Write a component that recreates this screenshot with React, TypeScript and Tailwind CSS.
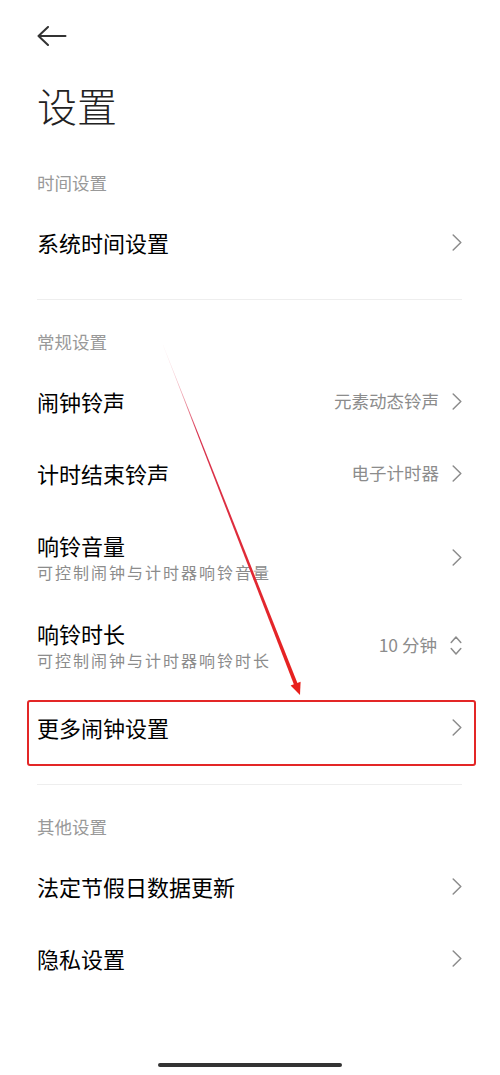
import React from 'react';

const font = { fontFamily: '"Noto Sans CJK SC", "Noto Sans", sans-serif' };

function Chevron() {
  return (
    <svg width="10" height="17" viewBox="0 0 10 17" fill="none" className="shrink-0">
      <path d="M1.2 1 L8.8 8.5 L1.2 16" stroke="#8c8c8c" strokeWidth="1.5" strokeLinecap="round" strokeLinejoin="round" />
    </svg>
  );
}

function UpDown() {
  return (
    <svg width="12" height="21" viewBox="0 0 12 21" fill="none" className="shrink-0">
      <path d="M1.2 7.5 L6 2 L10.8 7.5" stroke="#8c8c8c" strokeWidth="1.5" strokeLinecap="round" strokeLinejoin="round" />
      <path d="M1.2 13.5 L6 19 L10.8 13.5" stroke="#8c8c8c" strokeWidth="1.5" strokeLinecap="round" strokeLinejoin="round" />
    </svg>
  );
}

function SectionLabel({ children }: { children: React.ReactNode }) {
  return (
    <div className="h-[45px] flex items-center text-[17.5px] text-[#999999]">{children}</div>
  );
}

function Row({ title, value }: { title: string; value?: string }) {
  return (
    <div className="h-[72px] flex items-center justify-between">
      <span className="text-[22px] text-black">{title}</span>
      <div className="flex items-center gap-[13px]">
        {value && <span className="text-[17.5px] text-[#8c8c8c]">{value}</span>}
        <Chevron />
      </div>
    </div>
  );
}

function TwoLineRow({ title, sub, value, updown }: { title: string; sub: string; value?: string; updown?: boolean }) {
  return (
    <div className="h-[88px] pt-[22px] flex justify-between">
      <div className="flex flex-col">
        <span className="text-[22px] leading-[28px] text-black">{title}</span>
        <span className="text-[16px] leading-[24px] mt-[1px] tracking-[2px] text-[#8c8c8c]">{sub}</span>
      </div>
      <div className="h-[53px] flex items-center gap-[13px]">
        {value && <span className="text-[17.5px] text-[#8c8c8c]">{value}</span>}
        {updown ? <UpDown /> : <Chevron />}
      </div>
    </div>
  );
}

function Divider() {
  return <div className="h-px bg-[#eeeeee]" />;
}

export default function App() {
  return (
    <div className="relative w-[500px] min-h-[1075px] bg-white flex flex-col overflow-hidden" style={font}>
      <div className="px-[37px] pr-[38px] flex flex-col">
        <div className="h-[72px] flex items-center">
          <svg width="30" height="20" viewBox="0 0 30 20" fill="none">
            <path d="M1.5 10 H28.5 M11 1 L1.5 10 L11 19" stroke="#333333" strokeWidth="2" strokeLinecap="round" strokeLinejoin="round" />
          </svg>
        </div>
        <h1 className="mt-[5px] h-[56px] flex items-center text-[40px] font-light text-[#222222]">设置</h1>

        <div className="mt-[28px]">
          <SectionLabel>时间设置</SectionLabel>
        </div>
        <Row title="系统时间设置" />
        <div className="mt-[21px]">
          <Divider />
        </div>

        <div className="mt-[20px]">
          <SectionLabel>常规设置</SectionLabel>
        </div>
        <Row title="闹钟铃声" value="元素动态铃声" />
        <Row title="计时结束铃声" value="电子计时器" />
        <TwoLineRow title="响铃音量" sub="可控制闹钟与计时器响铃音量" />
        <TwoLineRow title="响铃时长" sub="可控制闹钟与计时器响铃时长" value="10 分钟" updown />
        <div className="relative h-[84px] flex items-center justify-between">
          <span className="text-[22px] text-black">更多闹钟设置</span>
          <Chevron />
          <div className="absolute left-[-10px] right-[-14px] top-[15px] bottom-[3px] border-2 border-[#e32626] rounded-[3px]" />
        </div>
        <div className="mt-[15px]">
          <Divider />
        </div>

        <div className="mt-[20px]">
          <SectionLabel>其他设置</SectionLabel>
        </div>
        <Row title="法定节假日数据更新" />
        <Row title="隐私设置" />
      </div>

      <div className="mt-auto mb-[8px] self-center w-[184px] h-[4px] rounded-full bg-[#333333]" />

      {/* annotation arrow */}
      <svg className="absolute left-0 top-0 pointer-events-none" width="500" height="1075" viewBox="0 0 500 1075">
        <defs>
          <linearGradient id="shaft" x1="163" y1="345" x2="300" y2="695" gradientUnits="userSpaceOnUse">
            <stop offset="0" stopColor="#f3b6c0" stopOpacity="0.2" />
            <stop offset="0.25" stopColor="#d8334f" />
            <stop offset="1" stopColor="#e8201c" />
          </linearGradient>
        </defs>
        <polygon points="163.1,344.9 162.9,345.1 294.1,684.9 297.6,683.5" fill="url(#shaft)" />
        <polygon points="300,695 290.6,685.6 300.6,681.8" fill="#e8201c" />
      </svg>
    </div>
  );
}
